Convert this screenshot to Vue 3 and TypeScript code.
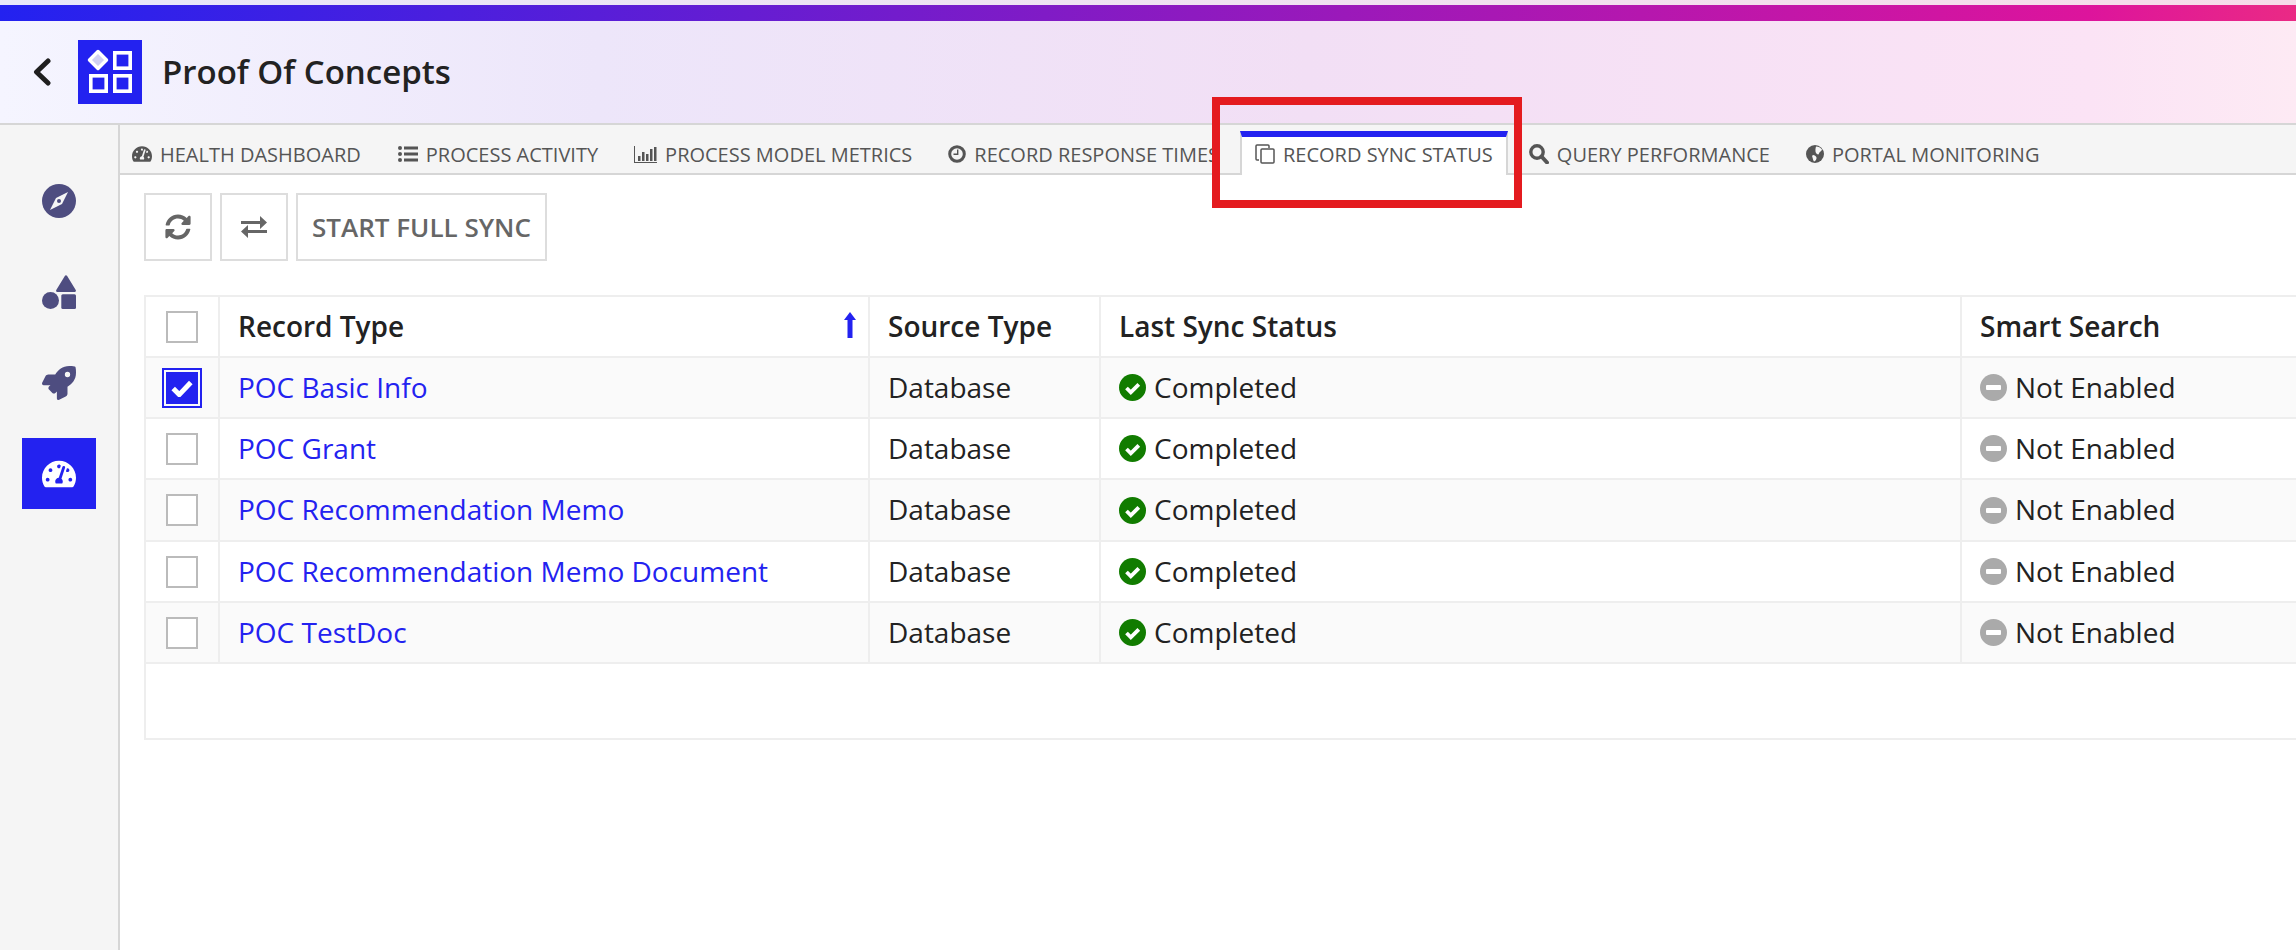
<script setup lang="ts">
interface Tab {
  label: string;
  icon: string;
  active?: boolean;
}

const tabs: Tab[] = [
  { label: 'HEALTH DASHBOARD', icon: 'gauge' },
  { label: 'PROCESS ACTIVITY', icon: 'list' },
  { label: 'PROCESS MODEL METRICS', icon: 'chart' },
  { label: 'RECORD RESPONSE TIMES', icon: 'clock' },
  { label: 'RECORD SYNC STATUS', icon: 'copy', active: true },
  { label: 'QUERY PERFORMANCE', icon: 'search' },
  { label: 'PORTAL MONITORING', icon: 'globe' },
];

const rows = [
  { name: 'POC Basic Info', checked: true },
  { name: 'POC Grant', checked: false },
  { name: 'POC Recommendation Memo', checked: false },
  { name: 'POC Recommendation Memo Document', checked: false },
  { name: 'POC TestDoc', checked: false },
];

// same gauge is used in the side nav and in the first tab
const gaugePath =
  'M288 32C128.94 32 0 160.94 0 320c0 52.8 14.25 102.26 39.06 144.8 5.61 9.62 16.3 15.2 27.44 15.2h443c11.14 0 21.83-5.58 27.44-15.2C561.75 422.26 576 372.8 576 320c0-159.06-128.94-288-288-288zm0 64c14.71 0 26.58 10.13 30.32 23.65-1.11 2.26-2.64 4.23-3.45 6.67l-9.22 27.67c-5.13 3.49-10.97 6.01-17.64 6.01-17.67 0-32-14.33-32-32S270.33 96 288 96zM96 384c-17.67 0-32-14.33-32-32s14.33-32 32-32 32 14.33 32 32-14.33 32-32 32zm48-160c-17.67 0-32-14.33-32-32s14.33-32 32-32 32 14.33 32 32-14.33 32-32 32zm246.77-72.41l-61.33 184C343.13 347.33 352 364.54 352 384c0 11.72-3.38 22.55-8.88 32H232.88c-5.5-9.45-8.88-20.28-8.88-32 0-33.94 26.5-61.43 59.9-63.59l61.34-184.01c4.17-12.56 17.73-19.45 30.36-15.17 12.57 4.19 19.35 17.79 15.17 30.36zm14.66 57.2l15.52-46.55c3.47-1.29 7.13-2.23 11.05-2.23 17.67 0 32 14.33 32 32s-14.33 32-32 32c-11.38-.01-20.89-6.28-26.57-15.22zM480 384c-17.67 0-32-14.33-32-32s14.33-32 32-32 32 14.33 32 32-14.33 32-32 32z';
</script>

<template>
  <div class="page">
    <div class="topbar"></div>
    <header class="header">
      <svg class="back" viewBox="0 0 18 28"><path d="M15 3 3.500 14 15 25" fill="none" stroke="#1f1f1f" stroke-width="5" stroke-linecap="round" stroke-linejoin="round" /></svg>
      <div class="logo">
        <svg viewBox="0 0 64 64" width="64" height="64">
          <path d="M20 11.500 28.500 20 20 28.500 11.500 20Z" fill="#d0d0f2" stroke="#fff" stroke-width="3.500" stroke-linejoin="round" />
          <rect x="36.800" y="12.800" width="15.400" height="15.400" fill="none" stroke="#fff" stroke-width="3.600" />
          <rect x="12.800" y="35.800" width="15.400" height="15.400" fill="none" stroke="#fff" stroke-width="3.600" />
          <rect x="36.800" y="35.800" width="15.400" height="15.400" fill="none" stroke="#fff" stroke-width="3.600" />
        </svg>
      </div>
      <h1 class="title">Proof Of Concepts</h1>
    </header>

    <div class="body">
      <aside class="side">
        <a class="side-item">
          <svg viewBox="0 0 34 34" width="34" height="34"><circle cx="17" cy="17" r="17" /><path d="M26 8 20 20 8 26 14 14Z" fill="#f5f5f5" /><circle cx="17" cy="17" r="2" /></svg>
        </a>
        <a class="side-item">
          <svg viewBox="0 0 34 34" width="34" height="34"><path d="M24 1.500 32.700 15.700H15.300Z" stroke="#4e4d80" stroke-width="2.400" stroke-linejoin="round" /><circle cx="8.500" cy="25.500" r="8.500" /><rect x="19.300" y="19.300" width="14.700" height="14.700" rx="1.500" /></svg>
        </a>
        <a class="side-item">
          <svg viewBox="0 0 512 512" width="34" height="34"><path d="M505.12 19.09c-1.19-5.53-6.66-11-12.21-12.18C460.72 0 435.51 0 410.41 0 307.18 0 245.27 55.2 199.05 128H94.84c-16.35.02-35.56 11.88-42.89 26.48L2.52 253.3A28.4 28.4 0 0 0 0 264a24 24 0 0 0 24 24h103.81l-22.47 22.47c-11.37 11.36-13 32.26 0 45.25l50.9 50.9c11.16 11.19 32.16 13.16 45.28 0l22.48-22.47V488a24 24 0 0 0 24 24 28.56 28.56 0 0 0 10.71-2.52l98.73-49.39c14.63-7.3 26.5-26.5 26.5-42.86V312.8c72.6-46.31 128.04-108.41 128.04-211.1.1-25.2.1-50.4-6.95-82.6zM384.04 168a40 40 0 1 1 40.01-40 40.02 40.02 0 0 1-40.01 40z" /></svg>
        </a>
        <a class="side-item active">
          <svg viewBox="0 32 576 448" width="34" height="28"><path :d="gaugePath" /></svg>
        </a>
      </aside>

      <main class="main">
        <nav class="tabs">
          <div v-for="tab in tabs" :key="tab.label" class="tab" :class="{ active: tab.active }">
            <svg v-if="tab.icon === 'gauge'" class="tab-icon" viewBox="0 32 576 448"><path :d="gaugePath" /></svg>
            <svg v-else-if="tab.icon === 'list'" class="tab-icon" viewBox="0 0 20 16"><circle cx="2" cy="2" r="2" /><circle cx="2" cy="8" r="2" /><circle cx="2" cy="14" r="2" /><path d="M6 .5h14v3H6zM6 6.500h14v3H6zM6 12.500h14v3H6z" /></svg>
            <svg v-else-if="tab.icon === 'chart'" class="tab-icon chart" viewBox="0 0 23 17"><path d="M0 0h1v16h22v1H0z" /><path d="M4 10h2.500v5H4zM8 6h2.500v9H8zM12 8h2.500v7H12zM16 3h2.500v12H16zM20 1h2.500v14H20z" /></svg>
            <svg v-else-if="tab.icon === 'clock'" class="tab-icon clock" viewBox="0 0 18 18"><circle cx="9" cy="9" r="7.300" fill="none" stroke="#555" stroke-width="3" /><path d="M9 4.500h1.400V10H5.500V8.600H9z" /></svg>
            <svg v-else-if="tab.icon === 'copy'" class="tab-icon copy" viewBox="0 0 20 20" fill="none" stroke="#555" stroke-width="1.500"><path d="M4 16H2a1 1 0 0 1-1-1V2a1 1 0 0 1 1-1h11a1 1 0 0 1 1 1v2" /><rect x="6" y="5" width="13" height="14" rx="1" /></svg>
            <svg v-else-if="tab.icon === 'search'" class="tab-icon copy" viewBox="0 0 20 20" fill="none" stroke="#555"><circle cx="8" cy="8" r="6.200" stroke-width="3.400" /><path d="m12.500 12.500 5.500 6" stroke-width="4" stroke-linecap="round" /></svg>
            <svg v-else class="tab-icon globe" viewBox="0 0 18 18"><circle cx="9" cy="9" r="9" /><path d="M10 1.500c2.500 0 4.500 1 6 3-.5 2-2.500 2-3 4-.3 1.500-2 1-3-.5C9 6 9.500 3.500 10 1.500ZM7 10c1.500 0 3 1 3.500 2.500.3 1.500-1 3.500-2.500 4-1-1.500-1-2.500-1.500-4C6 11.500 6 10.500 7 10Z" fill="#f5f5f5" /></svg>
            <span>{{ tab.label }}</span>
          </div>
        </nav>

        <div class="toolbar">
          <button class="btn icon-btn">
            <svg viewBox="0 0 512 512" width="26" height="26" fill="#666"><path d="M370.72 133.28C339.458 104.008 298.888 87.962 255.848 88c-77.458.068-144.328 53.178-162.791 126.85-1.344 5.363-6.122 9.15-11.651 9.15H24.103c-7.498 0-13.194-6.807-11.807-14.176C33.933 94.924 134.813 8 256 8c66.448 0 126.791 26.136 171.315 68.685L463.03 40.97C478.149 25.851 504 36.559 504 57.941V192c0 13.255-10.745 24-24 24H345.941c-21.382 0-32.09-25.851-16.971-40.971l41.75-41.749zM32 296h134.059c21.382 0 32.09 25.851 16.971 40.971l-41.75 41.75c31.262 29.273 71.835 45.319 114.876 45.28 77.418-.07 144.315-53.144 162.787-126.849 1.344-5.363 6.122-9.15 11.651-9.15h57.304c7.498 0 13.194 6.807 11.807 14.176C478.067 417.076 377.187 504 256 504c-66.448 0-126.791-26.136-171.315-68.685L48.97 471.03C33.851 486.149 8 475.441 8 454.059V320c0-13.255 10.745-24 24-24z" /></svg>
          </button>
          <button class="btn icon-btn">
            <svg viewBox="0 0 26 22" width="26" height="22" fill="#666"><path d="M0 5h19V0l7 6.500-7 6.500V8H0zM26 14H7V9L0 15.500 7 22v-5h19z" /></svg>
          </button>
          <button class="btn text-btn">START FULL SYNC</button>
        </div>

        <div class="grid">
          <div class="row head">
            <div class="cell c-check"><span class="box"></span></div>
            <div class="cell c-type">
              Record Type
              <svg class="sort" viewBox="0 0 12 26" width="12" height="26"><path d="M6 0 12 8H8.500V26H3.500V8H0Z" fill="#2322f0" /></svg>
            </div>
            <div class="cell c-source">Source Type</div>
            <div class="cell c-sync">Last Sync Status</div>
            <div class="cell c-search">Smart Search</div>
          </div>
          <div v-for="row in rows" :key="row.name" class="row item">
            <div class="cell c-check">
              <span v-if="row.checked" class="box checked">
                <svg viewBox="0 0 20 16" width="22" height="18"><path d="M2 8.500 7.500 14 18 3" fill="none" stroke="#fff" stroke-width="4.500" /></svg>
              </span>
              <span v-else class="box"></span>
            </div>
            <div class="cell c-type"><a class="link">{{ row.name }}</a></div>
            <div class="cell c-source">Database</div>
            <div class="cell c-sync">
              <svg class="status" viewBox="0 0 27 27" width="27" height="27"><circle cx="13.500" cy="13.500" r="13.500" fill="#117c00" /><path d="m7.500 14 4.300 4.300 8-8" fill="none" stroke="#fff" stroke-width="3.800" /></svg>
              Completed
            </div>
            <div class="cell c-search">
              <svg class="status" viewBox="0 0 27 27" width="27" height="27"><circle cx="13.500" cy="13.500" r="13.500" fill="#aaa" /><rect x="6" y="11" width="15" height="5" rx="1" fill="#fff" /></svg>
              Not Enabled
            </div>
          </div>
          <div class="empty"></div>
        </div>
      </main>
    </div>

    <div class="callout"></div>
  </div>
</template>

<style>
html,
body {
  margin: 0;
  overflow: hidden;
}
</style>

<style scoped>
.page {
  position: relative;
  width: 2296px;
  height: 950px;
  display: flex;
  flex-direction: column;
  overflow: hidden;
  font-family: 'Open Sans', 'Noto Sans', sans-serif;
  color: #222;
  padding-top: 5px;
  box-sizing: border-box;
  background: linear-gradient(90deg, #e8e8fa, #f6dbe9);
}
.topbar {
  height: 16px;
  flex: none;
  background: linear-gradient(90deg, #2322f0, #dd149c 91%, #ea2a85);
}
.header {
  height: 102px;
  flex: none;
  display: flex;
  align-items: center;
  border-bottom: 2px solid #d6d6d6;
  background: linear-gradient(90deg, #f5f5ff, #ede6fa 26%, #f2dff5 57%, #fbe3f5 91%, #fdeaf4);
}
.back {
  width: 18px;
  height: 28px;
  margin-left: 33px;
}
.logo {
  width: 64px;
  height: 64px;
  margin-left: 27px;
  background: #2322f0;
}
.logo svg {
  display: block;
}
.title {
  margin: 0 0 2px 20px;
  font-size: 33px;
  font-weight: 600;
  color: #222;
}
.body {
  flex: 1;
  display: flex;
  min-height: 0;
  background: #fff;
}
.side {
  width: 118px;
  flex: none;
  border-right: 2px solid #d6d6d6;
  background: #f5f5f5;
  display: flex;
  flex-direction: column;
  align-items: center;
  padding-top: 40px;
}
.side-item {
  width: 74px;
  height: 71px;
  display: flex;
  align-items: center;
  justify-content: center;
  margin-bottom: 20px;
  fill: #4e4d80;
}
.side-item.active {
  background: #2322f0;
  fill: #fff;
}
.main {
  flex: 1;
  min-width: 0;
}
.tabs {
  height: 48px;
  display: flex;
  gap: 6px;
  background: #f5f5f5;
  border-bottom: 2px solid #d6d6d6;
}
.tab {
  display: flex;
  align-items: center;
  gap: 8px;
  padding: 10px 15px 0;
  font-size: 20px;
  white-space: nowrap;
  color: #555;
  fill: #555;
  height: 48px;
  box-sizing: border-box;
}
.tab:first-child {
  padding: 10px 16px 0 12px;
}
.tab.active {
  margin-top: 6px;
  background: #fff;
  border-top: 6px solid #2322f0;
  border-left: 2px solid #d6d6d6;
  border-right: 2px solid #d6d6d6;
  box-sizing: content-box;
  height: 34px;
  padding: 0 13px 4px;
}
.tab-icon {
  width: 20px;
  height: 18px;
  flex: none;
}
.tab-icon.chart {
  width: 23px;
  height: 17px;
}
.tab-icon.copy {
  height: 20px;
}
.tab-icon.clock,
.tab-icon.globe {
  width: 18px;
  height: 18px;
}
.toolbar {
  display: flex;
  gap: 8px;
  padding: 18px 0 0 24px;
}
.btn {
  height: 68px;
  padding: 0;
  display: flex;
  align-items: center;
  justify-content: center;
  background: #fff;
  border: 2px solid #ddd;
  box-sizing: border-box;
  font-family: inherit;
  color: #666;
}
.icon-btn {
  width: 68px;
}
.text-btn {
  width: 251px;
  font-size: 26px;
  font-weight: 600;
}
.grid {
  margin: 34px 0 0 24px;
  width: 2300px;
  border: 2px solid #eee;
  border-right: none;
  box-sizing: border-box;
}
.row {
  display: flex;
  height: 61px;
  border-bottom: 2px solid #eee;
  box-sizing: border-box;
  font-size: 28px;
}
.item:nth-child(even) {
  background: #fafafa;
}
.item:nth-child(4) {
  height: 62px;
}
.head {
  font-weight: 600;
}
.cell {
  display: flex;
  align-items: center;
  padding: 0 0 2px 18px;
  box-sizing: border-box;
  border-right: 2px solid #eee;
}
.c-check {
  width: 74px;
  padding: 0;
  justify-content: center;
}
.c-type {
  width: 650px;
  position: relative;
}
.c-source {
  width: 231px;
}
.c-sync {
  width: 861px;
}
.c-search {
  flex: 1;
  border-right: none;
}
.link {
  color: #2322f0;
}
.status {
  margin: 2px 8px 0 0;
  flex: none;
}
.sort {
  position: absolute;
  right: 12px;
  top: 15px;
}
.box {
  width: 32px;
  height: 32px;
  box-sizing: border-box;
  border: 2px solid #bbb;
  background: #fff;
  display: flex;
  align-items: center;
  justify-content: center;
}
.box.checked {
  border: none;
  background: #2322f0;
  outline: 2px solid #2322f0;
  outline-offset: 2px;
}
.empty {
  height: 74px;
}
.callout {
  position: absolute;
  left: 1212px;
  top: 97px;
  width: 310px;
  height: 111px;
  box-sizing: border-box;
  border: 8px solid #e41b1f;
}
</style>
